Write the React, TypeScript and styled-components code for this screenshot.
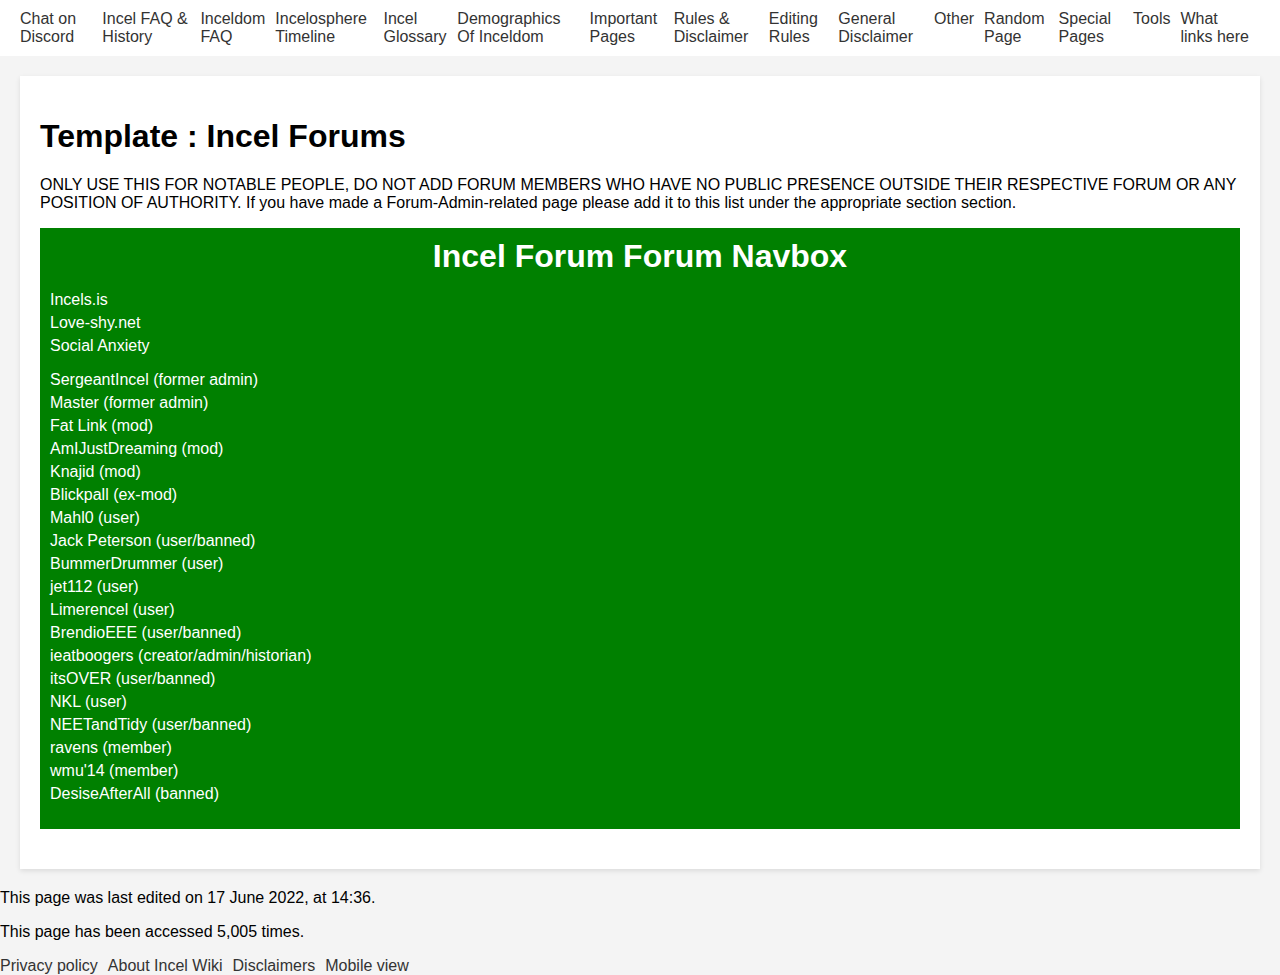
import React from "react";
import styled, { createGlobalStyle } from "styled-components";

const GlobalStyle = createGlobalStyle`
  body {
    margin: 0;
    padding: 0;
    background: #f4f4f4;
    color: #000;
    font-family: Arial, "Liberation Sans", sans-serif;
    font-size: 16px;
  }
`;

const Nav = styled.nav`
  background: #fff;
  padding: 10px 20px;
`;

const LinkRow = styled.ul`
  display: flex;
  list-style: none;
  margin: 0;
  padding: 0;
`;

const LinkItem = styled.li`
  margin-right: 10px;
`;

const PlainLink = styled.a`
  color: #333;
  text-decoration: none;
`;

const Content = styled.main`
  margin: 20px;
  padding: 20px;
  background: #fff;
  box-shadow: 0 2px 5px rgba(0, 0, 0, 0.1);
`;

const Title = styled.h1`
  margin: 20px 0;
  font-size: 32px;
  line-height: 40px;
`;

const Paragraph = styled.p`
  margin: 16px 0;
`;

const Navbox = styled.section`
  margin-bottom: 20px;
  padding: 10px;
  background: green;
  color: #fff;
`;

const NavboxTitle = styled.h2`
  margin: 0 0 16px;
  font-size: 32px;
  text-align: center;
`;

const NavboxList = styled.ul`
  list-style: none;
  margin: 0 0 16px;
  padding: 0;
`;

const NavboxItem = styled.li`
  margin-bottom: 5px;
`;

const NavboxLink = styled.a`
  color: #fff;
  text-decoration: none;
`;

const navLinks = [
  "Chat on Discord",
  "Incel FAQ & History",
  "Inceldom FAQ",
  "Incelosphere Timeline",
  "Incel Glossary",
  "Demographics Of Inceldom",
  "Important Pages",
  "Rules & Disclaimer",
  "Editing Rules",
  "General Disclaimer",
  "Other",
  "Random Page",
  "Special Pages",
  "Tools",
  "What links here",
];

const forums = ["Incels.is", "Love-shy.net", "Social Anxiety"];

const people = [
  "SergeantIncel (former admin)",
  "Master (former admin)",
  "Fat Link (mod)",
  "AmIJustDreaming (mod)",
  "Knajid (mod)",
  "Blickpall (ex-mod)",
  "Mahl0 (user)",
  "Jack Peterson (user/banned)",
  "BummerDrummer (user)",
  "jet112 (user)",
  "Limerencel (user)",
  "BrendioEEE (user/banned)",
  "ieatboogers (creator/admin/historian)",
  "itsOVER (user/banned)",
  "NKL (user)",
  "NEETandTidy (user/banned)",
  "ravens (member)",
  "wmu'14 (member)",
  "DesiseAfterAll (banned)",
];

const footerLinks = ["Privacy policy", "About Incel Wiki", "Disclaimers", "Mobile view"];

function Links({ items }: { items: string[] }) {
  return (
    <LinkRow>
      {items.map((item) => (
        <LinkItem key={item}>
          <PlainLink href="#">{item}</PlainLink>
        </LinkItem>
      ))}
    </LinkRow>
  );
}

function NavboxGroup({ items }: { items: string[] }) {
  return (
    <NavboxList>
      {items.map((item) => (
        <NavboxItem key={item}>
          <NavboxLink href="#">{item}</NavboxLink>
        </NavboxItem>
      ))}
    </NavboxList>
  );
}

export default function App() {
  return (
    <>
      <GlobalStyle />
      <Nav>
        <Links items={navLinks} />
      </Nav>
      <Content>
        <Title>Template : Incel Forums</Title>
        <Paragraph>
          ONLY USE THIS FOR NOTABLE PEOPLE, DO NOT ADD FORUM MEMBERS WHO HAVE NO PUBLIC PRESENCE
          OUTSIDE THEIR RESPECTIVE FORUM OR ANY POSITION OF AUTHORITY. If you have made a
          Forum-Admin-related page please add it to this list under the appropriate section section.
        </Paragraph>
        <Navbox>
          <NavboxTitle>Incel Forum Forum Navbox</NavboxTitle>
          <NavboxGroup items={forums} />
          <NavboxGroup items={people} />
        </Navbox>
      </Content>
      <footer>
        <Paragraph>This page was last edited on 17 June 2022, at 14:36.</Paragraph>
        <Paragraph>This page has been accessed 5,005 times.</Paragraph>
        <Links items={footerLinks} />
      </footer>
    </>
  );
}
